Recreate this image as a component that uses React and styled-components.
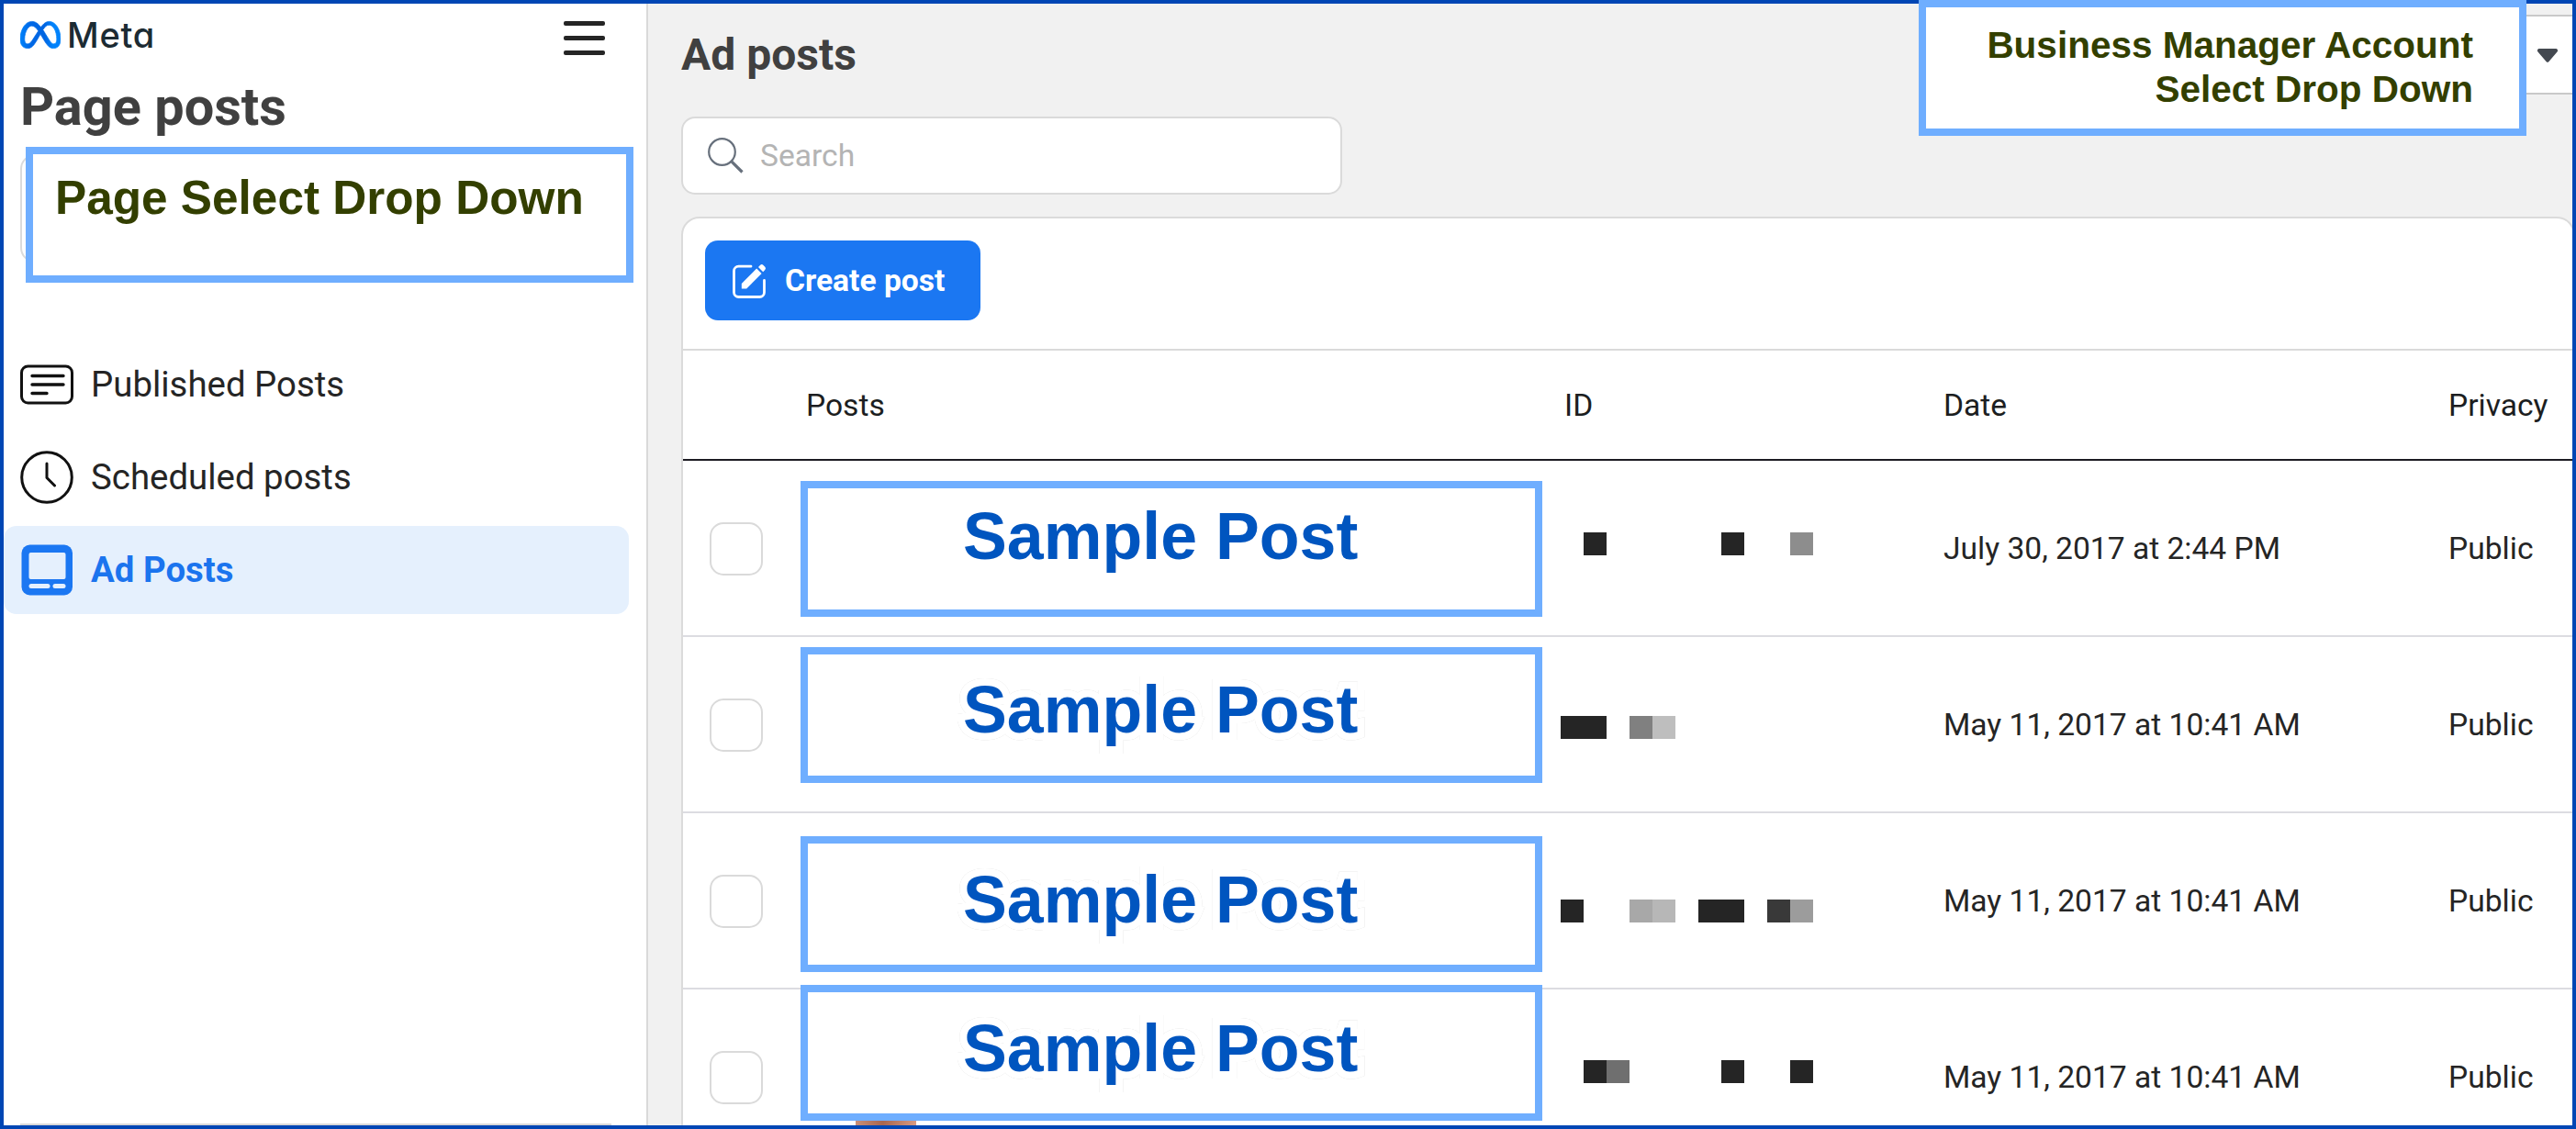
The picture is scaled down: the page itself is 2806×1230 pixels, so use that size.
import React from "react"
import styled, { createGlobalStyle, css } from "styled-components"
import { SiMeta } from "react-icons/si"

const GlobalStyle = createGlobalStyle`
  * {
    box-sizing: border-box;
  }

  body {
    margin: 0;
    overflow: hidden;
    font-family: Roboto, sans-serif;
    color: #252525;
  }
`

const Frame = styled.div`
  position: relative;
  display: flex;
  width: 2806px;
  height: 1230px;
  border: 4px solid #0046b4;
  background: #f1f1f1;
`

const Sidebar = styled.aside`
  display: flex;
  flex-direction: column;
  flex: none;
  width: 702px;
  overflow: hidden;
  background: #fff;
  border-right: 2px solid #d9d9d9;
`

const Brand = styled.div`
  display: flex;
  align-items: center;
  justify-content: space-between;
  height: 74px;
  padding: 0 45px 0 18px;
`

const Logo = styled.div`
  display: flex;
  align-items: center;
  gap: 7px;
  height: 44px;
  margin-bottom: 7px;
  color: #1c2b33;
  font-family: Inter, sans-serif;
  font-size: 38px;
  font-weight: 500;
  line-height: 44px;
  letter-spacing: 0.7px;
  font-feature-settings: "cv11";

  .mark path {
    fill: url(#metaBlue);
    stroke: url(#metaBlue);
    stroke-width: 0.4;
  }
`

const GradientDefs = styled.svg`
  position: absolute;
  width: 0;
  height: 0;
`

const Hamburger = styled.div`
  display: flex;
  flex-direction: column;
  gap: 11px;
  width: 45px;

  span {
    height: 5px;
    border-radius: 2px;
    background: #252525;
  }
`

const SidebarTitle = styled.h1`
  margin: 6px 0 20px;
  padding-left: 18px;
  color: #404040;
  font-size: 57.7px;
  font-weight: 700;
  line-height: 64px;
`

const PageSelect = styled.div`
  flex: none;
  width: 644px;
  height: 118px;
  margin-left: 18px;
  border: 2px solid #dbdbdb;
  border-radius: 16px;
`

const Nav = styled.nav`
  display: flex;
  flex-direction: column;
  gap: 5px;
  margin-top: 85px;
`

const NavItem = styled.div`
  display: flex;
  align-items: center;
  gap: 19px;
  width: 681px;
  height: 96px;
  padding: 0 0 2px 18px;
  border-radius: 14px;
  font-size: 38.4px;

  svg {
    flex: none;
    margin-top: 2px;
  }

  ${({ $active }) =>
    $active &&
    css`
      color: #1b74ee;
      background: #e5f0fd;
      font-weight: 700;
    `}
`

const SidebarFooter = styled.div`
  width: 644px;
  height: 2px;
  margin: auto 0 0 18px;
  background: #d8d8d8;
`

const Main = styled.main`
  display: flex;
  flex-direction: column;
  flex: 1;
  min-width: 0;
  padding-left: 36px;
  overflow: hidden;
`

const TopBar = styled.div`
  display: flex;
  flex: none;
  justify-content: space-between;
  height: 123px;
`

const Title = styled.h2`
  margin: 26px 0 0;
  color: #404040;
  font-size: 48px;
  font-weight: 700;
  line-height: 60px;
`

const AccountSelect = styled.div`
  display: flex;
  align-items: center;
  justify-content: flex-end;
  width: 640px;
  height: 87px;
  margin: 12px -4px 0 0;
  padding: 2px 17px 0 0;
  border: 2px solid #c9c9c9;
  background: #fff;
`

const Search = styled.div`
  display: flex;
  align-items: center;
  flex: none;
  gap: 18px;
  width: 720px;
  height: 85px;
  padding: 0 0 1px 27px;
  border: 2px solid #dadada;
  border-radius: 15px;
  background: #fff;
  color: #b4b4b4;
  font-size: 33.6px;
`

const Card = styled.section`
  flex: none;
  width: 2063px;
  height: 1040px;
  margin-top: 24px;
  border: 2px solid #dbdbdb;
  border-radius: 20px;
  background: #fff;
`

const Toolbar = styled.div`
  height: 144px;
  padding: 24px;
  border-bottom: 2px solid #dadada;
`

const CreateButton = styled.button`
  display: flex;
  align-items: center;
  gap: 20px;
  width: 300px;
  height: 87px;
  padding: 0 0 0 29px;
  border: 0;
  border-radius: 14px;
  background: #1b77f2;
  color: #fff;
  font-family: inherit;
  font-size: 33.6px;
  font-weight: 700;
`

const columns = "134px 822px 417px 550px 1fr"

const HeaderRow = styled.div`
  display: grid;
  grid-template-columns: ${columns};
  align-items: center;
  height: 120px;
  border-bottom: 2px solid #1c1b22;
  color: #1c1e21;
  font-size: 33.6px;
`

const Row = styled.div`
  display: grid;
  grid-template-columns: ${columns};
  height: 192px;
  border-bottom: 2px solid #dcdce1;
  font-size: 33.6px;
`

const Cell = styled.div`
  align-self: center;
  padding-left: ${({ $indent }) => $indent || 0}px;
  white-space: nowrap;
`

const Checkbox = styled.div`
  align-self: center;
  width: 58px;
  height: 58px;
  margin: 2px 0 0 29px;
  border: 2px solid #dadada;
  border-radius: 15px;
`

const PostColumn = styled.div`
  margin: ${({ $top }) => $top}px 0 0 -6px;
`

const Callout = styled.div`
  border: 8px solid #6faeff;
  background: #fff;
  font-family: "Liberation Sans", Arial, sans-serif;
  font-weight: 700;
  white-space: nowrap;
`

const SampleBox = styled(Callout)`
  width: 808px;
  height: 148px;
  padding: ${({ $textTop }) => $textTop}px 0 0 169px;
  color: #0055bf;
  font-size: 71.7px;
  line-height: 80px;

  span {
    ${({ $halo }) =>
      $halo &&
      css`
        -webkit-text-stroke: 16px #fff;
        paint-order: stroke fill;
        stroke-linejoin: round;
        filter: drop-shadow(0 0 0.6px #d4d4d4);
      `}
  }
`

const Avatar = styled.div`
  width: 66px;
  height: 30px;
  margin-left: 60px;
  background: linear-gradient(90deg, #c98f78, #a8664f 45%, #d79a82);
`

const Redacted = styled.div`
  display: flex;
  height: 25px;
  margin-top: ${({ $top }) => $top}px;
`

const Block = styled.span`
  width: 25px;
  height: 25px;
  background: ${({ $tone }) => $tone || "transparent"};
`

const PageCallout = styled(Callout)`
  position: absolute;
  top: 156px;
  left: 24px;
  width: 662px;
  height: 148px;
  padding: 18px 0 0 24px;
  color: #333f00;
  font-size: 51.3px;
  line-height: 60px;
`

const AccountCallout = styled(Callout)`
  position: absolute;
  top: -4px;
  left: 2086px;
  width: 662px;
  height: 148px;
  padding: 17px 50px 0 0;
  color: #333f00;
  font-size: 40.5px;
  line-height: 48px;
  text-align: right;
`

const PublishedIcon = () => (
  <svg width="58" height="58" viewBox="0 0 58 58" fill="none" stroke="#111" strokeLinecap="round">
    <rect x="1.5" y="9" width="55" height="40" rx="7" strokeWidth="3" />
    <path d="M13 19.5h34M13 29h34M13 38.5h16" strokeWidth="3.4" />
  </svg>
)

const ClockIcon = () => (
  <svg width="58" height="58" viewBox="0 0 58 58" fill="none" stroke="#111" strokeWidth="3">
    <circle cx="29" cy="29" r="27.3" />
    <path d="M29 14v15.5l8.5 8.5" strokeLinecap="round" strokeLinejoin="round" />
  </svg>
)

const AdIcon = () => (
  <svg width="58" height="58" viewBox="0 0 58 58">
    <rect x="1.5" y="1.5" width="55.5" height="55" rx="9" fill="#1b77f2" />
    <g fill="#e5f0fd">
      <rect x="9.5" y="10" width="40" height="29" rx="2" />
      <rect x="9.5" y="44" width="23" height="5" rx="2.5" />
      <rect x="35.5" y="44" width="14" height="5" rx="2.5" />
    </g>
  </svg>
)

const SearchIcon = () => (
  <svg width="39" height="39" viewBox="0 0 39 39" fill="none" stroke="#67707c">
    <circle cx="15.5" cy="15.5" r="14.3" strokeWidth="2.2" />
    <path d="M25.8 25.8L37.5 37.5" strokeWidth="3.2" />
  </svg>
)

const ComposeIcon = () => (
  <svg width="38" height="38" viewBox="0 0 38 38" fill="none" stroke="#fff">
    <path
      d="M21 3.2H7.5a5 5 0 0 0-5 5V31.5a5 5 0 0 0 5 5H30.5a5 5 0 0 0 5-5V18.5"
      strokeWidth="2.8"
      strokeLinecap="round"
    />
    <path d="M10.8 27.6v-5.6L27.2 5.6l5.4 5.4L16.2 27.4z" fill="#fff" stroke="none" />
    <path d="M29 4l2.2-2.2a2.2 2.2 0 0 1 3.1 0l2 2a2.2 2.2 0 0 1 0 3.1L34.2 9.2z" fill="#fff" stroke="none" />
  </svg>
)

const CaretIcon = () => (
  <svg width="24" height="17" viewBox="0 0 24 17">
    <path d="M3 1h18a2 2 0 0 1 1.5 3.4L13.5 15a2 2 0 0 1-3 0L1.5 4.4A2 2 0 0 1 3 1z" fill="#444950" />
  </svg>
)

const ink = "#252525"

const posts = [
  {
    id: [null, ink, null, null, null, null, null, ink, null, null, "#8d8d8d"],
    date: "July 30, 2017 at 2:44 PM",
    boxTop: 22,
    textTop: 12,
    idTop: 78,
  },
  {
    id: [ink, ink, null, "#808080", "#bebebe"],
    date: "May 11, 2017 at 10:41 AM",
    boxTop: 11,
    textTop: 20,
    idTop: 86,
    halo: true,
  },
  {
    id: [ink, null, null, "#a8a8a8", "#b7b7b7", null, ink, ink, null, "#393939", "#9c9c9c"],
    date: "May 11, 2017 at 10:41 AM",
    boxTop: 25,
    textTop: 21,
    idTop: 94,
    halo: true,
  },
  {
    id: [null, ink, "#6f6f6f", null, null, null, null, ink, null, null, ink],
    date: "May 11, 2017 at 10:41 AM",
    boxTop: -5,
    textTop: 21,
    idTop: 77,
    halo: true,
    avatar: true,
  },
]

const PostRow = ({ post }) => (
  <Row>
    <Checkbox />
    <PostColumn $top={post.boxTop}>
      <SampleBox $textTop={post.textTop} $halo={post.halo}>
        <span>Sample Post</span>
      </SampleBox>
      {post.avatar && <Avatar />}
    </PostColumn>
    <Redacted $top={post.idTop}>
      {post.id.map((tone, i) => (
        <Block key={i} $tone={tone} />
      ))}
    </Redacted>
    <Cell>{post.date}</Cell>
    <Cell>Public</Cell>
  </Row>
)

const App = () => {
  return (
    <>
      <GlobalStyle />
      <Frame>
        <Sidebar>
          <Brand>
            <Logo>
              <GradientDefs>
                <linearGradient id="metaBlue">
                  <stop offset="0" stopColor="#0082fb" />
                  <stop offset="0.25" stopColor="#0068e6" />
                  <stop offset="0.6" stopColor="#0064e1" />
                  <stop offset="0.8" stopColor="#0082fb" />
                </linearGradient>
              </GradientDefs>
              <SiMeta className="mark" size={44} />
              Meta
            </Logo>
            <Hamburger>
              <span />
              <span />
              <span />
            </Hamburger>
          </Brand>

          <SidebarTitle>Page posts</SidebarTitle>
          <PageSelect />

          <Nav>
            <NavItem>
              <PublishedIcon />
              Published Posts
            </NavItem>
            <NavItem>
              <ClockIcon />
              Scheduled posts
            </NavItem>
            <NavItem $active>
              <AdIcon />
              Ad Posts
            </NavItem>
          </Nav>
          <SidebarFooter />
        </Sidebar>

        <Main>
          <TopBar>
            <Title>Ad posts</Title>
            <AccountSelect>
              <CaretIcon />
            </AccountSelect>
          </TopBar>

          <Search>
            <SearchIcon />
            Search
          </Search>

          <Card>
            <Toolbar>
              <CreateButton>
                <ComposeIcon />
                Create post
              </CreateButton>
            </Toolbar>
            <HeaderRow>
              <span />
              <Cell>Posts</Cell>
              <Cell $indent={4}>ID</Cell>
              <Cell>Date</Cell>
              <Cell>Privacy</Cell>
            </HeaderRow>
            {posts.map((post, i) => (
              <PostRow key={i} post={post} />
            ))}
          </Card>
        </Main>

        <PageCallout>Page Select Drop Down</PageCallout>
        <AccountCallout>
          Business Manager Account
          <br />
          Select Drop Down
        </AccountCallout>
      </Frame>
    </>
  )
}

export default App
